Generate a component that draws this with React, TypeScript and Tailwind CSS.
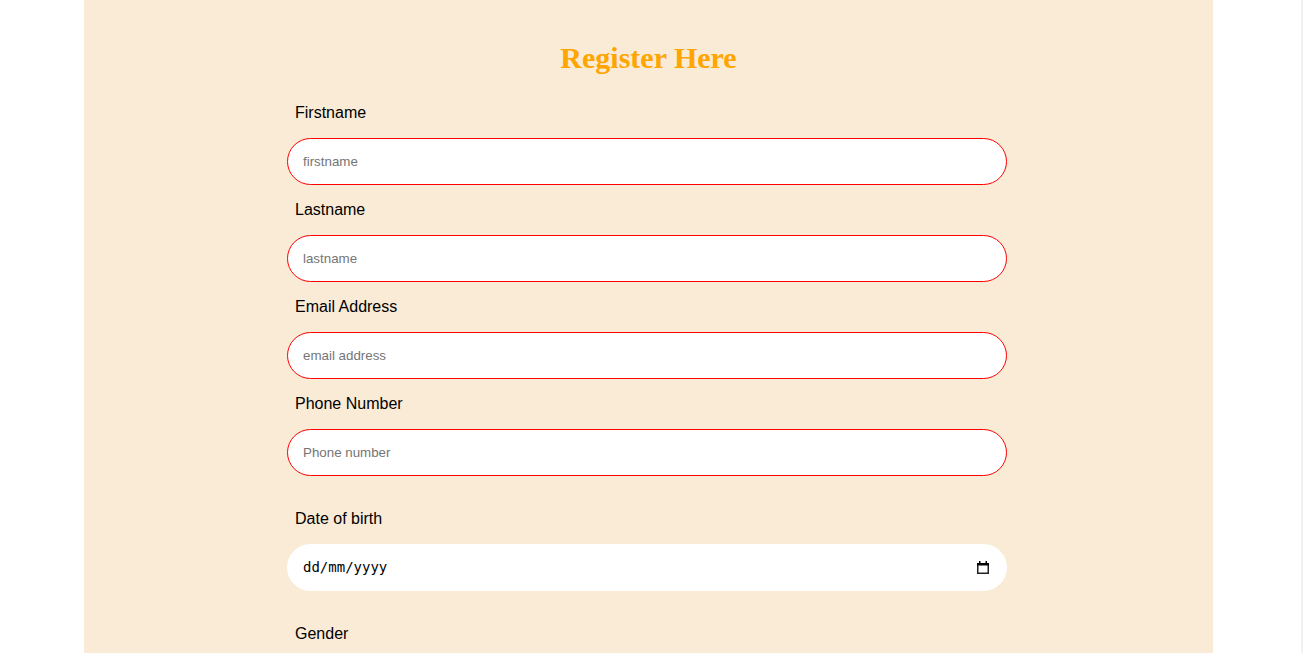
const fields = [
  { label: "Firstname", placeholder: "firstname", type: "text" },
  { label: "Lastname", placeholder: "lastname", type: "text" },
  { label: "Email Address", placeholder: "email address", type: "email" },
  { label: "Phone Number", placeholder: "Phone number", type: "tel" },
];

const CalendarIcon = () => (
  <svg width="12" height="13" viewBox="0 0 12 13" className="shrink-0">
    <rect x="2" y="0" width="1.5" height="3" fill="#000" />
    <rect x="8.5" y="0" width="1.5" height="3" fill="#000" />
    <rect x="0.75" y="2.75" width="10.5" height="9.5" fill="none" stroke="#222" strokeWidth="1.5" />
    <rect x="0" y="2" width="12" height="2.5" fill="#000" />
  </svg>
);

const App = () => {
  return (
    <div className="flex h-[653px] overflow-hidden bg-white font-['Liberation_Sans',Arial,sans-serif] text-black">
      <div className="w-[84px] shrink-0" />
      <div className="w-[1129px] shrink-0 bg-[#faebd7]">
        <h1 className="mt-[41px] text-center font-['Liberation_Serif',serif] text-[30px] leading-[34px] font-bold text-[#ffa500]">
          Register Here
        </h1>
        <form className="ml-[203px] w-[720px] pt-[13px]">
          {fields.map((field) => (
            <div key={field.label} className="mt-[16px] flex flex-col">
              <label className="pl-[8px] text-[16px] leading-[18px]">
                {field.label}
              </label>
              <input
                type={field.type}
                placeholder={field.placeholder}
                className="mt-[16px] h-[47px] rounded-full border border-[#ff0000] bg-white px-[15px] text-[13.33px] outline-none placeholder:text-[#757575]"
              />
            </div>
          ))}
          <div className="mt-[34px] flex flex-col">
            <label className="pl-[8px] text-[16px] leading-[18px]">Date of birth</label>
            <div className="mt-[16px] flex h-[47px] items-center justify-between rounded-full bg-white pr-[18px] pl-[16px]">
              <span className="font-['DejaVu_Sans_Mono',monospace] text-[14px] text-black">
                dd/mm/yyyy
              </span>
              <CalendarIcon />
            </div>
          </div>
          <div className="mt-[34px] flex flex-col">
            <label className="pl-[8px] text-[16px] leading-[18px]">Gender</label>
          </div>
        </form>
      </div>
      <div className="flex-1" />
      <div className="w-[2px] shrink-0 bg-[#f1f1f1]" />
    </div>
  );
};

export default App;
